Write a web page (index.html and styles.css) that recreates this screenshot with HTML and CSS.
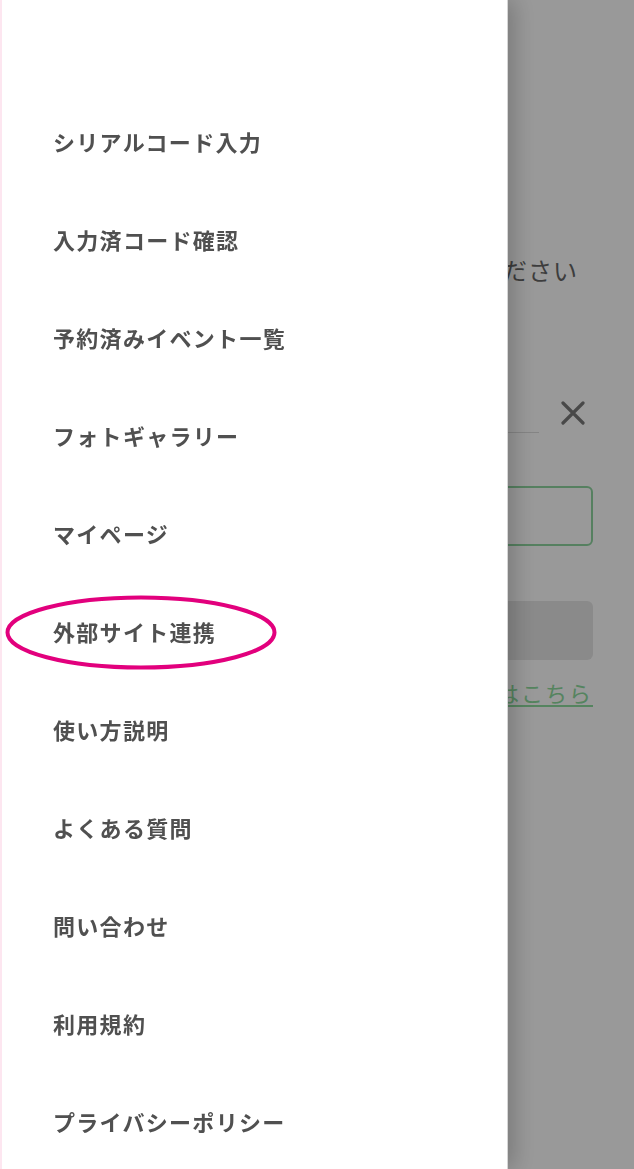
FILE: index.html
```html
<!DOCTYPE html>
<html lang="ja">
<head>
<meta charset="utf-8">
<title>メニュー</title>
<link rel="stylesheet" href="styles.css">
</head>
<body>
<main class="page">
  <p class="lead">ください</p>
  <div class="input-row">
    <div class="input-line"></div>
    <button class="clear" aria-label="クリア">
      <svg width="24" height="24" viewBox="0 0 24 24"><path d="M2 2 L22 22 M22 2 L2 22" stroke="#7a7a7a" stroke-width="3.2" stroke-linecap="round" fill="none"/></svg>
    </button>
  </div>
  <div class="code-box"></div>
  <div class="submit"></div>
  <a class="link" href="#">はこちら</a>
</main>
<div class="overlay"></div>
<nav class="drawer">
  <ul class="menu">
    <li class="item">シリアルコード入力</li>
    <li class="item">入力済コード確認</li>
    <li class="item">予約済みイベント一覧</li>
    <li class="item">フォトギャラリー</li>
    <li class="item">マイページ</li>
    <li class="item marked">外部サイト連携
      <svg class="ring" width="272" height="75" viewBox="0 0 272 75"><ellipse cx="136" cy="37.5" rx="133.5" ry="35" fill="none" stroke="#e2007d" stroke-width="4"/></svg>
    </li>
    <li class="item">使い方説明</li>
    <li class="item">よくある質問</li>
    <li class="item">問い合わせ</li>
    <li class="item">利用規約</li>
    <li class="item">プライバシーポリシー</li>
  </ul>
</nav>
</body>
</html>
```

FILE: styles.css
```css
* { box-sizing: border-box; }
html, body {
  margin: 0;
  padding: 0;
  height: 100%;
  overflow: hidden;
}
body {
  background: #fff;
  font-family: "Noto Sans CJK JP", "Noto Sans", sans-serif;
  color: #333;
}
.page {
  padding: 252px 41px 0 41px;
  display: flex;
  flex-direction: column;
}
.lead {
  margin: 0;
  font-size: 24px;
  line-height: 36px;
  color: #666;
  text-align: right;
  padding-right: 15px;
  white-space: nowrap;
  letter-spacing: 1px;
}
.input-row {
  margin-top: 105px;
  height: 40px;
  display: flex;
  align-items: center;
  gap: 22px;
}
.input-line {
  flex: 1;
  align-self: stretch;
  border-bottom: 1px solid #ddd;
}
.clear {
  border: 0;
  background: none;
  padding: 0;
  margin-right: 8px;
  width: 24px;
  height: 24px;
  display: flex;
}
.code-box {
  margin-top: 53px;
  height: 60px;
  border: 2px solid #8fd6a0;
  border-radius: 6px;
}
.submit {
  margin-top: 55px;
  height: 59px;
  border-radius: 6px;
  background: #e6e6e6;
}
.link {
  margin-top: 20px;
  align-self: flex-end;
  font-size: 22px;
  line-height: 24px;
  color: #8edc9e;
  text-decoration: underline;
  text-underline-offset: 3px;
  letter-spacing: 2px;
  white-space: nowrap;
}
.overlay {
  position: fixed;
  inset: 0;
  background: rgba(0, 0, 0, 0.4);
}
.drawer {
  position: fixed;
  top: 0;
  left: 0;
  bottom: 0;
  width: 508px;
  background: #fff;
  border-left: 2px solid #fde6f0;
  border-right: 1px solid #d6d6d6;
  box-shadow: 6px 0 22px rgba(0, 0, 0, 0.22);
}
.menu {
  list-style: none;
  margin: 0;
  padding: 92px 0 0 0;
}
.item {
  position: relative;
  height: 98px;
  display: flex;
  align-items: center;
  padding-left: 51px;
  font-size: 22px;
  font-weight: 700;
  letter-spacing: 1.3px;
  color: #505050;
}
.ring {
  position: absolute;
  left: 3px;
  top: 13px;
}
```
